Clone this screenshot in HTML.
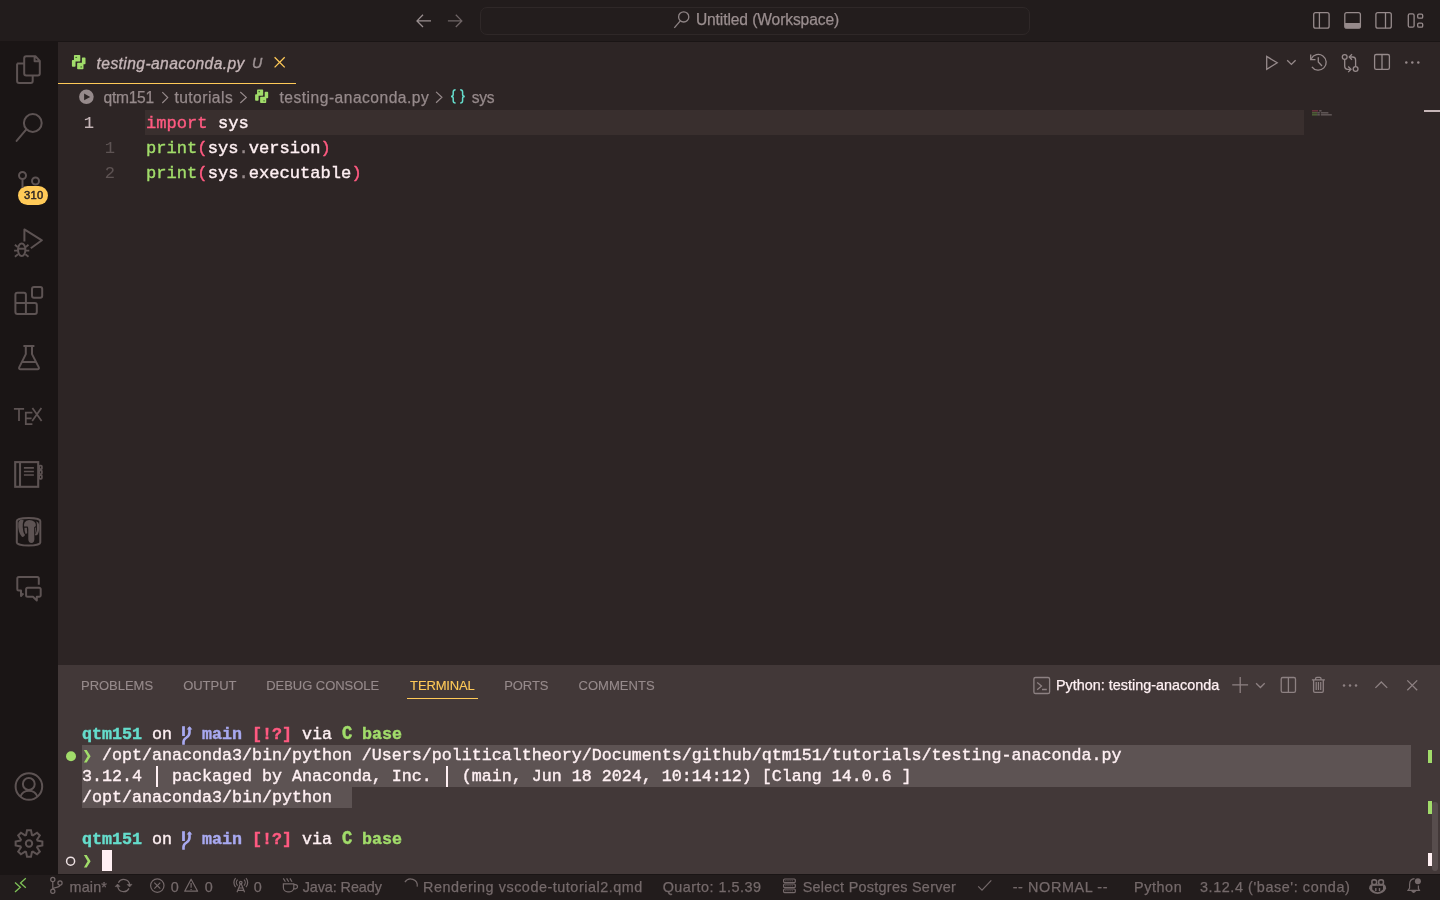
<!DOCTYPE html><html><head><meta charset="utf-8"><title>testing-anaconda.py</title><style>
html,body{margin:0;padding:0;background:#2d2525;font-family:"Liberation Sans", sans-serif}
#r{position:relative;width:1440px;height:900px;overflow:hidden;background:#2d2525;font-family:"Liberation Sans", sans-serif}
#r div,#r span,#r svg{position:absolute}
.t{white-space:pre;line-height:1;-webkit-text-stroke:0.25px currentColor}
.m{font-family:"Liberation Mono", monospace;white-space:pre;line-height:1;-webkit-text-stroke:0.4px currentColor}
</style></head><body><div id="r">
<div style="left:0;top:0;width:1440px;height:41px;background:#221c1c"></div>
<div style="left:0;top:41px;width:1440px;height:1px;background:#1a1515"></div>
<div style="left:0;top:42px;width:58px;height:833px;background:#1a1515"></div>
<div style="left:480px;top:6.5px;width:547.5px;height:26.5px;border:1px solid #2f2828;border-radius:7px;background:#231d1d"></div>
<div style="left:58px;top:82.8px;width:238.2px;height:1.4px;background:#ffca58"></div>
<div style="left:145px;top:110px;width:1159px;height:25px;background:#392f2e"></div>
<div style="left:1424px;top:110px;width:16px;height:2px;background:#c6b6b8"></div>
<div style="left:58px;top:664.5px;width:1382px;height:210px;background:#423838"></div>
<div style="left:406.6px;top:697.6px;width:71px;height:1.3px;background:#ffca58"></div>
<div style="left:82px;top:745px;width:1329px;height:42px;background:#5d5353"></div>
<div style="left:82px;top:787px;width:270px;height:21px;background:#5d5353"></div>
<div style="left:102.2px;top:850px;width:9.6px;height:21px;background:#fff0f3"></div>
<div style="left:1428px;top:750px;width:4.4px;height:13px;background:#a1dc6a"></div>
<div style="left:1428px;top:801px;width:4.4px;height:13px;background:#a1dc6a"></div>
<div style="left:1428px;top:853px;width:4.4px;height:13px;background:#fff0f3"></div>
<div style="left:1432.4px;top:802px;width:5.5px;height:69px;border-radius:3px;background:#574d4d"></div>
<div style="left:0;top:874.3px;width:1440px;height:26px;background:#221c1c"></div>
<div style="left:0;top:874px;width:1440px;height:1px;background:#1a1515"></div>
<div style="left:17.8px;top:185.5px;width:30.3px;height:19.6px;border-radius:10px;background:#ffca58"></div>
<div id="tx" style="left:0;top:0;width:1440px;height:900px;will-change:transform">
<span class="t" style="left:695.90px;top:12.29px;font-size:15.6px;color:#9a8e8f;letter-spacing:-0.106px">Untitled (Workspace)</span>
<span class="t" style="left:96.60px;top:55.69px;font-size:15.6px;color:#c6b6b8;letter-spacing:0.409px;font-style:italic;-webkit-text-stroke-width:0.35px">testing-anaconda.py</span>
<span class="t" style="left:251.90px;top:56.18px;font-size:14.2px;color:#9d9293;letter-spacing:0.000px;font-style:italic;-webkit-text-stroke-width:0.45px">U</span>
<span class="t" style="left:103.60px;top:89.69px;font-size:15.6px;color:#968a8b;letter-spacing:-0.288px">qtm151</span>
<span class="t" style="left:174.40px;top:89.69px;font-size:15.6px;color:#968a8b;letter-spacing:0.462px">tutorials</span>
<span class="t" style="left:279.50px;top:89.69px;font-size:15.6px;color:#968a8b;letter-spacing:0.492px">testing-anaconda.py</span>
<span class="t" style="left:471.80px;top:89.69px;font-size:15.6px;color:#968a8b;letter-spacing:-0.297px">sys</span>
<span class="t" style="left:81.00px;top:679.30px;font-size:13.0px;color:#968a8b;letter-spacing:-0.025px;-webkit-text-stroke-width:0.12px">PROBLEMS</span>
<span class="t" style="left:183.20px;top:679.30px;font-size:13.0px;color:#968a8b;letter-spacing:-0.040px;-webkit-text-stroke-width:0.12px">OUTPUT</span>
<span class="t" style="left:266.20px;top:679.30px;font-size:13.0px;color:#968a8b;letter-spacing:-0.037px;-webkit-text-stroke-width:0.12px">DEBUG CONSOLE</span>
<span class="t" style="left:410.10px;top:679.30px;font-size:13.0px;color:#ffca58;letter-spacing:-0.143px;-webkit-text-stroke-width:0.12px">TERMINAL</span>
<span class="t" style="left:504.30px;top:679.30px;font-size:13.0px;color:#968a8b;letter-spacing:-0.119px;-webkit-text-stroke-width:0.12px">PORTS</span>
<span class="t" style="left:578.50px;top:679.30px;font-size:13.0px;color:#968a8b;letter-spacing:0.049px;-webkit-text-stroke-width:0.12px">COMMENTS</span>
<span class="t" style="left:1056.00px;top:678.01px;font-size:14.4px;color:#fff0f3;letter-spacing:-0.000px">Python: testing-anaconda</span>
<span class="t" style="left:69.50px;top:879.81px;font-size:14.4px;color:#74696a;letter-spacing:0.152px">main*</span>
<span class="t" style="left:170.80px;top:879.81px;font-size:14.4px;color:#74696a;letter-spacing:0.000px">0</span>
<span class="t" style="left:204.70px;top:879.81px;font-size:14.4px;color:#74696a;letter-spacing:0.000px">0</span>
<span class="t" style="left:253.80px;top:879.81px;font-size:14.4px;color:#74696a;letter-spacing:0.000px">0</span>
<span class="t" style="left:302.70px;top:879.81px;font-size:14.4px;color:#74696a;letter-spacing:-0.080px">Java: Ready</span>
<span class="t" style="left:423.00px;top:879.81px;font-size:14.4px;color:#74696a;letter-spacing:0.528px">Rendering vscode-tutorial2.qmd</span>
<span class="t" style="left:662.70px;top:879.81px;font-size:14.4px;color:#74696a;letter-spacing:0.485px">Quarto: 1.5.39</span>
<span class="t" style="left:802.70px;top:879.81px;font-size:14.4px;color:#74696a;letter-spacing:0.282px">Select Postgres Server</span>
<span class="t" style="left:1012.70px;top:879.81px;font-size:14.4px;color:#74696a;letter-spacing:0.605px">-- NORMAL --</span>
<span class="t" style="left:1134.00px;top:879.81px;font-size:14.4px;color:#74696a;letter-spacing:0.580px">Python</span>
<span class="t" style="left:1200.00px;top:879.81px;font-size:14.4px;color:#74696a;letter-spacing:0.585px">3.12.4 ('base': conda)</span>
<span class="t" style="left:23.90px;top:189.52px;font-size:11.2px;color:#2d2525;letter-spacing:0.328px;-webkit-text-stroke-width:0.45px">310</span>
<span class="m" style="left:146px;top:114.89px;font-size:17.1px;letter-spacing:0.008px"><span style="position:static;color:#ff5a81">import</span><span style="position:static;color:#fff0f3"> sys</span></span>
<span class="m" style="left:146px;top:139.89px;font-size:17.1px;letter-spacing:0.008px"><span style="position:static;color:#a1dc6a">print</span><span style="position:static;color:#ff5a81">(</span><span style="position:static;color:#fff0f3">sys</span><span style="position:static;color:#968a8b">.</span><span style="position:static;color:#fff0f3">version</span><span style="position:static;color:#ff5a81">)</span></span>
<span class="m" style="left:146px;top:164.89px;font-size:17.1px;letter-spacing:0.008px"><span style="position:static;color:#a1dc6a">print</span><span style="position:static;color:#ff5a81">(</span><span style="position:static;color:#fff0f3">sys</span><span style="position:static;color:#968a8b">.</span><span style="position:static;color:#fff0f3">executable</span><span style="position:static;color:#ff5a81">)</span></span>
<span class="m" style="left:83.8px;top:114.89px;font-size:17.1px;color:#c6b6b8;-webkit-text-stroke-width:0.15px">1</span>
<span class="m" style="left:104.8px;top:139.89px;font-size:17.1px;color:#5d5353;-webkit-text-stroke-width:0.1px">1</span>
<span class="m" style="left:104.8px;top:164.89px;font-size:17.1px;color:#5d5353;-webkit-text-stroke-width:0.1px">2</span>
<span class="m" style="left:82px;top:727.32px;font-size:16.664px"><span style="position:static;color:#65ddcc;font-weight:bold">qtm151</span><span style="position:static;color:#fff0f3"> on   </span><span style="position:static;color:#a8a9f0;font-weight:bold">main</span><span style="position:static;color:#fff0f3"> </span><span style="position:static;color:#ff5a81;font-weight:bold">[!?]</span><span style="position:static;color:#fff0f3"> via </span><span style="position:static;color:#a1dc6a;font-weight:bold"> </span><span style="position:static;color:#fff0f3"> </span><span style="position:static;color:#a1dc6a;font-weight:bold">base</span></span>
<span class="m" style="left:341.8px;top:727.32px;font-size:16.664px;font-weight:bold;color:#a1dc6a;transform-origin:0 12.78px;transform:scale(1.03,1.2)">C</span>
<span class="m" style="left:341.8px;top:832.32px;font-size:16.664px;font-weight:bold;color:#a1dc6a;transform-origin:0 12.78px;transform:scale(1.03,1.2)">C</span>
<span class="m" style="left:82px;top:748.32px;font-size:16.664px"><span style="position:static;color:#fff0f3">  /opt/anaconda3/bin/python /Users/politicaltheory/Documents/github/qtm151/tutorials/testing-anaconda.py</span></span>
<span class="m" style="left:82px;top:769.32px;font-size:16.664px"><span style="position:static;color:#fff0f3">3.12.4   packaged by Anaconda, Inc.   (main, Jun 18 2024, 10:14:12) [Clang 14.0.6 ]</span></span>
<div style="left:155.9px;top:766px;width:2.1px;height:21px;background:#fff0f3"></div><div style="left:445.9px;top:766px;width:2.1px;height:21px;background:#fff0f3"></div>
<span class="m" style="left:82px;top:790.32px;font-size:16.664px"><span style="position:static;color:#fff0f3">/opt/anaconda3/bin/python</span></span>
<span class="m" style="left:82px;top:832.32px;font-size:16.664px"><span style="position:static;color:#65ddcc;font-weight:bold">qtm151</span><span style="position:static;color:#fff0f3"> on   </span><span style="position:static;color:#a8a9f0;font-weight:bold">main</span><span style="position:static;color:#fff0f3"> </span><span style="position:static;color:#ff5a81;font-weight:bold">[!?]</span><span style="position:static;color:#fff0f3"> via </span><span style="position:static;color:#a1dc6a;font-weight:bold"> </span><span style="position:static;color:#fff0f3"> </span><span style="position:static;color:#a1dc6a;font-weight:bold">base</span></span>
</div>
<svg width="1440" height="900" viewBox="0 0 1440 900" style="left:0;top:0" fill="none" stroke-linecap="butt" stroke-linejoin="miter">
<g stroke="#5d5353" stroke-width="2" stroke-linejoin="round">
<path d="M17.1 63.4 H24 M17.1 63.4 V80.9 a2 2 0 0 0 2 2 H30.7 a2 2 0 0 0 2 -2 V76"/>
<path d="M26.2 56.3 H35.4 L39.8 60.9 V73.6 a2 2 0 0 1 -2 2 H26.2 a2 2 0 0 1 -2 -2 V58.3 a2 2 0 0 1 2 -2 Z M34.6 56.6 V61.2 H39.6"/>
<circle cx="32.8" cy="123" r="8.9"/><path d="M26.3 129.3 L16.6 140.9" stroke-linecap="round"/>
<circle cx="22.5" cy="175.5" r="3.5"/><circle cx="35.5" cy="181" r="3.5"/><path d="M22.5 179 V188"/>
<path d="M24.4 241.4 V229.4 L41.9 240.3 L30.8 248.2" stroke-linejoin="round"/>
</g>
<g stroke="#5d5353" stroke-width="2">
<ellipse cx="21.7" cy="249.7" rx="3.7" ry="6.3"/><path d="M18 248.7 H25.4"/>
<path d="M14.9 244.8 L17.6 247 M14.1 250.7 H17.8 M14.9 256.8 L18 254.2 M28.5 244.8 L25.8 247 M29.3 250.7 H25.6 M28.5 256.8 L25.4 254.2" stroke-width="1.8"/>
</g>
<g stroke="#5d5353" stroke-width="2" stroke-linejoin="round">
<path d="M15.4 303 V294.7 a2 2 0 0 1 2 -2 H23.9 a2 2 0 0 1 2 2 V303 H34.8 a2 2 0 0 1 2 2 V312 a2 2 0 0 1 -2 2 H17.4 a2 2 0 0 1 -2 -2 Z M15.4 303 H25.9 V314"/>
<rect x="32" y="287.1" width="10.2" height="10.7" rx="2"/>
<path d="M23.4 346 H34.4 M25.8 346 V354.1 L19.2 367.4 a1.3 1.3 0 0 0 1.2 1.9 H37.6 a1.3 1.3 0 0 0 1.2 -1.9 L32 354.1 V346 M22.2 361.9 H35.6"/>
</g>
<g stroke="#5d5353" stroke-width="1.75">
<path d="M13.9 408.8 H24.1 M19 408.8 V420.9"/>
<path d="M32.4 412.7 H25.8 V424.2 H32.4 M25.8 418.3 H31.6"/>
<path d="M32.4 407.9 L41.6 420.9 M41.4 407.9 L32.2 420.9"/>
</g>
<g stroke="#5d5353" stroke-width="2.1">
<rect x="15.2" y="462.1" width="23" height="24.7"/><path d="M20 462 V487"/>
</g>
<g stroke="#5d5353" stroke-width="1.7">
<path d="M23.9 467.9 H33.9 M23.9 471.5 H33.9 M23.9 475 H33.9"/>
<rect x="39.3" y="465.6" width="2.6" height="3.6" rx="0.8"/><rect x="39.3" y="470.4" width="2.6" height="3.6" rx="0.8"/><rect x="39.3" y="475.2" width="2.6" height="3.6" rx="0.8"/>
</g>
<g stroke="#5d5353" stroke-width="2">
<path d="M16.8 521 A11.75 3 0 0 1 40.3 521 V542.5 A11.75 3 0 0 1 16.8 542.5 Z"/>
</g>
<g fill="#5d5353" stroke="none">
<path d="M20.2 520 Q18.5 521 18.3 522.7 Q17.8 527 19 531.5 Q19.8 534 21 535.4 Q22 537 22.7 537.1 Q23.8 536.6 25.1 534.9 Q23.6 533.4 23.3 531.5 Q22.4 527 22.8 523.7 Q23.1 521.5 23.8 520.5 Q22.2 519.4 20.2 520 Z"/>
<path d="M24.6 522.5 Q26 520 29 520 Q32.6 520 34.4 521.7 Q35.8 523 35.9 525.2 L35.4 526.6 L34.2 526.9 L34.2 532 L34.4 539.3 Q34.2 543 31.5 543 Q28.4 543 28.3 539.3 L28.3 529.6 Q28.3 527.4 27.6 526.6 L24.1 526.4 Q23.7 524.4 24.6 522.5 Z"/>
<path d="M24.4 527.7 H26.9 L27.2 533.2 L25.6 534 Q24.4 531.5 24.4 527.7 Z"/>
<path d="M36.1 521.2 Q38.6 522 39.3 524.7 Q39.6 527.4 39.3 529.6 Q38.8 532.4 37.8 534.4 L36 535.6 L34.8 535 Q36.9 532 36.9 529.6 V524.7 Q36.8 522.6 36.1 521.2 Z"/>
<path d="M35 527.8 L35.8 527.5 Q36 531 35.3 533.6 L35 533.6 Z"/>
</g>
<g stroke="#5d5353" stroke-width="2" stroke-linejoin="round">
<path d="M38.8 584.8 V578.5 a1.5 1.5 0 0 0 -1.5 -1.5 H18.8 a1.5 1.5 0 0 0 -1.5 1.5 V588.9 a1.5 1.5 0 0 0 1.5 1.5 H21 V596 L23.4 593.4"/>
<path d="M27.6 587.8 H39.2 a1.5 1.5 0 0 1 1.5 1.5 V595.3 a1.5 1.5 0 0 1 -1.5 1.5 H36.8 V600.4 L33 596.8 H27.6 a1.5 1.5 0 0 1 -1.5 -1.5 V589.3 a1.5 1.5 0 0 1 1.5 -1.5 Z"/>
<circle cx="28.9" cy="786.5" r="13.3"/><circle cx="28.8" cy="784" r="5.9"/><path d="M20.3 796.6 A9.2 9.2 0 0 1 37.5 796.6"/>
</g>
<g stroke="#5d5353" stroke-width="2" stroke-linejoin="miter">
<path d="M26.05 835.00 L27.05 830.14 L30.95 830.14 L31.95 835.00 L32.93 835.40 L37.07 832.68 L39.82 835.43 L37.10 839.57 L37.50 840.55 L42.36 841.55 L42.36 845.45 L37.50 846.45 L37.10 847.43 L39.82 851.57 L37.07 854.32 L32.93 851.60 L31.95 852.00 L30.95 856.86 L27.05 856.86 L26.05 852.00 L25.07 851.60 L20.93 854.32 L18.18 851.57 L20.90 847.43 L20.50 846.45 L15.64 845.45 L15.64 841.55 L20.50 840.55 L20.90 839.57 L18.18 835.43 L20.93 832.68 L25.07 835.40 Z"/><circle cx="29" cy="843.5" r="3.2"/>
</g>
<g stroke="#9a8f90" stroke-width="1.3"><path d="M423 14.8 L417 20.9 L423 27 M417.2 20.9 H431"/></g>
<g stroke="#6f6566" stroke-width="1.3"><path d="M455.8 14.8 L461.8 20.9 L455.8 27 M461.6 20.9 H447.9"/></g>
<g stroke="#8e8485" stroke-width="1.3"><circle cx="683.7" cy="16.9" r="5.1"/><path d="M680.3 20.8 L674.3 27.8"/></g>
<g stroke="#968a8b" stroke-width="1.3">
<rect x="1313.7" y="12.6" width="15.4" height="15.6" rx="2"/><path d="M1319.4 12.6 V28.2"/>
<rect x="1344.8" y="12.6" width="15.6" height="15.6" rx="2"/>
<rect x="1375.9" y="12.6" width="15.4" height="15.6" rx="2"/><path d="M1385.5 12.6 V28.2"/>
<rect x="1408.3" y="13.9" width="5.8" height="13.3" rx="1.5"/><rect x="1417.7" y="14.2" width="5" height="4" rx="1.2"/><rect x="1417.7" y="23.1" width="5" height="4.1" rx="1.2"/>
</g>
<path d="M1344.8 23 H1360.4 V26.2 a2 2 0 0 1 -2 2 H1346.8 a2 2 0 0 1 -2 -2 Z" fill="#968a8b"/>
<g transform="translate(78.72 62.14) scale(1.0)" fill="#a1dc6a" stroke="#a1dc6a" stroke-width="1.6" stroke-linejoin="round"><path d="M-3.97 -6.28 L0.78 -6.28 L0.78 -1.38 L-3.98 -1.38 L-3.98 3.82 L-6.00 3.82 L-6.00 -1.37 L-3.97 -1.37 Z"/><path d="M-3.97 -6.28 L0.78 -6.28 L0.78 -1.38 L-3.98 -1.38 L-3.98 3.82 L-6.00 3.82 L-6.00 -1.37 L-3.97 -1.37 Z" transform="rotate(180)"/><ellipse cx="-2.5" cy="-4.75" rx="0.95" ry="0.6" fill="#3f6a2c" stroke="none"/><ellipse cx="2.5" cy="4.75" rx="0.95" ry="0.6" fill="#3f6a2c" stroke="none"/></g>
<g transform="translate(261.65 96.25) scale(0.96)" fill="#a1dc6a" stroke="#a1dc6a" stroke-width="1.6" stroke-linejoin="round"><path d="M-3.97 -6.28 L0.78 -6.28 L0.78 -1.38 L-3.98 -1.38 L-3.98 3.82 L-6.00 3.82 L-6.00 -1.37 L-3.97 -1.37 Z"/><path d="M-3.97 -6.28 L0.78 -6.28 L0.78 -1.38 L-3.98 -1.38 L-3.98 3.82 L-6.00 3.82 L-6.00 -1.37 L-3.97 -1.37 Z" transform="rotate(180)"/><ellipse cx="-2.5" cy="-4.75" rx="0.95" ry="0.6" fill="#3f6a2c" stroke="none"/><ellipse cx="2.5" cy="4.75" rx="0.95" ry="0.6" fill="#3f6a2c" stroke="none"/></g>
<g stroke="#ffca58" stroke-width="1.3"><path d="M274.6 57.3 L284.7 67.4 M284.7 57.3 L274.6 67.4"/></g>
<circle cx="86.4" cy="96.8" r="7.3" fill="#968a8b"/><path d="M84.1 93.4 V100.3 L90.2 96.9 Z" fill="#2d2525"/>
<g stroke="#968a8b" stroke-width="1.2"><path d="M162.3 92.2 L167.7 97.6 L162.3 103 M240.3 92 L246.3 97.4 L240.3 103 M436.1 91.9 L441.9 97.3 L436.1 102.7"/></g>
<g stroke="#65ddcc" stroke-width="1.5"><path d="M455.6 89.7 Q453.2 89.7 453.2 92 V94.6 Q453.2 96.4 451 96.4 Q453.2 96.4 453.2 98.2 V100.8 Q453.2 103.1 455.6 103.1"/><path d="M460.2 89.7 Q462.6 89.7 462.6 92 V94.6 Q462.6 96.4 464.8 96.4 Q462.6 96.4 462.6 98.2 V100.8 Q462.6 103.1 460.2 103.1"/></g>
<g stroke="#968a8b" stroke-width="1.3">
<path d="M1266.7 56.4 V69.3 L1277.2 62.8 Z"/>
<path d="M1287.2 60.2 L1291.4 64.4 L1295.6 60.2"/>
<path d="M1311.3 58.8 A7.85 7.85 0 1 1 1311.9 66.8"/><path d="M1310.7 54.6 V59.6 H1315.5" /><path d="M1318.3 57.3 V62 L1322 66"/>
<circle cx="1344.7" cy="57" r="2.4"/><circle cx="1355.6" cy="69" r="2.4"/>
<path d="M1344.7 59.4 V66.3 Q1344.7 69.3 1347.7 69.3 H1350"/><path d="M1355.6 66.6 V60 Q1355.6 57 1352.6 57 H1350.2"/>
<path d="M1348.2 66.5 L1351 69.3 L1348.2 72.1 M1352 54.2 L1349.2 57 L1352 59.8"/>
<rect x="1374.6" y="54.5" width="14.8" height="14.8" rx="1.6"/><path d="M1382 54.5 V69.3"/>
</g>
<g fill="#968a8b"><circle cx="1406.3" cy="62.4" r="1.25"/><circle cx="1412.3" cy="62.4" r="1.25"/><circle cx="1418.3" cy="62.4" r="1.25"/></g>
<g opacity="0.5"><rect x="1312" y="110" width="6" height="1.6" fill="#a23d57"/><rect x="1319.2" y="110" width="2.4" height="1.6" fill="#8d8384"/><rect x="1312" y="112" width="5" height="1.6" fill="#6d9449"/><rect x="1317.2" y="112" width="2.6" height="1.6" fill="#8d8384"/><rect x="1320.8" y="112" width="7.6" height="1.6" fill="#8d8384"/><rect x="1312" y="114" width="5" height="1.6" fill="#6d9449"/><rect x="1317.2" y="114" width="2.6" height="1.6" fill="#8d8384"/><rect x="1320.8" y="114" width="11" height="1.6" fill="#8d8384"/></g>
<g stroke="#8d8182" stroke-width="1.3">
<rect x="1033.9" y="677.5" width="15.7" height="16" rx="1.6"/><path d="M1037.2 682.4 L1041.5 686 L1037.2 689.7 M1042 689.5 H1046.8"/>
<path d="M1232.2 684.9 H1248.1 M1240.2 677.1 V692.9"/>
<path d="M1256.1 683.2 L1260.4 687.5 L1264.7 683.2"/>
<rect x="1281.2" y="677.5" width="14.3" height="14.8" rx="1.6"/><path d="M1288.4 677.5 V692.3"/>
<path d="M1311.9 679.8 H1324.9 M1315.6 679.6 V678.6 a1.2 1.2 0 0 1 1.2 -1.2 H1319.8 a1.2 1.2 0 0 1 1.2 1.2 V679.6"/>
<path d="M1313.6 680 V691 a1.3 1.3 0 0 0 1.3 1.3 H1322 a1.3 1.3 0 0 0 1.3 -1.3 V680"/>
<path d="M1316.2 682 V690 M1318.45 682 V690 M1320.7 682 V690" stroke-width="1.2"/>
<path d="M1375.4 687.9 L1381.3 682 L1387.2 687.9"/>
<path d="M1407.3 680.4 L1417.2 690.3 M1417.2 680.4 L1407.3 690.3"/>
</g>
<g fill="#8d8182"><circle cx="1344" cy="685.5" r="1.25"/><circle cx="1350" cy="685.5" r="1.25"/><circle cx="1356" cy="685.5" r="1.25"/></g>
<g stroke="#a8a9f0" fill="none"><path d="M183.5 726.2 V736" stroke-width="2.8"/><path d="M189.5 727.4 V732.5 Q189.5 735.5 186.5 737.5 Q183.5 739.3 183.5 742 V744.8" stroke-width="2.6"/></g><path d="M186.6 729.6 L189.5 726.2 L192.4 729.6 Z" fill="#a8a9f0"/>
<g stroke="#a8a9f0" fill="none"><path d="M183.5 831.2 V841" stroke-width="2.8"/><path d="M189.5 832.4 V837.5 Q189.5 840.5 186.5 842.5 Q183.5 844.3 183.5 847 V849.8" stroke-width="2.6"/></g><path d="M186.6 834.6 L189.5 831.2 L192.4 834.6 Z" fill="#a8a9f0"/>
<path d="M83.9 750.1 H86.7 L90.6 756.3 L86.7 762.6 H83.9 L87.6 756.3 Z" fill="#a1dc6a"/>
<path d="M83.9 855.1 H86.7 L90.6 861.3 L86.7 867.6 H83.9 L87.6 861.3 Z" fill="#a1dc6a"/>
<circle cx="71" cy="756.2" r="5" fill="#a1dc6a"/>
<circle cx="70.6" cy="861.2" r="4" stroke="#ece0e2" stroke-width="1.5"/>
<g stroke="#7fc257" stroke-width="1.3"><path d="M15 882.5 L20.3 887.3 L15 892 M25.8 878.3 L20.5 883 L25.8 887.8"/></g>
<g stroke="#74696a" stroke-width="1.2">
<circle cx="52.8" cy="879.5" r="2.1"/><circle cx="52.8" cy="891.3" r="2.1"/><circle cx="60" cy="883" r="2.1"/><path d="M52.8 881.6 V889.2 M60 885.1 C60 888.3 54.2 886.4 52.9 889"/>
<path d="M118.4 882.7 A6 6 0 0 1 129.7 885 M129 888.4 A6 6 0 0 1 117.7 886.2"/><path d="M127.2 884.5 L132 884.3 L129.6 887 Z M115.2 886.6 L117.6 884 L120 886.6 Z" fill="#74696a" stroke-width="0.6"/>
<circle cx="157.3" cy="885.6" r="6.7"/><path d="M154.3 882.6 L160.3 888.6 M160.3 882.6 L154.3 888.6"/>
<path d="M191.1 879.2 L197.6 891.2 H184.7 Z" stroke-linejoin="round"/><path d="M191.1 883 V887.7 M191.1 888.9 V890.1"/>
<circle cx="240.8" cy="882.6" r="1.3"/><path d="M240.3 884 L237 892.2 M241.3 884 L244.6 892.2 M238.7 888 H242.9 M237.9 890.4 H243.7"/>
<path d="M237.6 879.6 A4.3 4.3 0 0 0 237.6 885.6 M244 879.6 A4.3 4.3 0 0 1 244 885.6 M235.6 878.2 A6.6 6.6 0 0 0 235.6 887 M246 878.2 A6.6 6.6 0 0 1 246 887"/>
<path d="M283.4 883.9 H293.8 V887.5 a4.4 4.4 0 0 1 -4.4 4.4 H287.8 a4.4 4.4 0 0 1 -4.4 -4.4 Z M293.8 884.6 H295.4 a2.1 2.1 0 0 1 0 4.2 H293.6"/><path d="M283.3 878.4 L285.4 881.8 M286.6 878.4 L288.7 881.8 M289.9 878.4 L292 881.8"/>
<path d="M404.9 882.1 A6.7 6.7 0 0 1 417.2 886.7"/>
<rect x="783.6" y="879" width="11.7" height="3.6" rx="1"/><rect x="783.6" y="884" width="11.7" height="3.6" rx="1"/><rect x="783.6" y="889" width="11.7" height="3.6" rx="1"/><path d="M785.4 880.8 H793.6 M785.4 885.8 H793.6 M785.4 890.8 H793.6" stroke-dasharray="1 1.1" stroke-width="1"/>
<path d="M978.2 886.4 L982 890.2 L991.3 880.3"/>
<rect x="1371.9" y="879.9" width="4.7" height="4.7" rx="1.8" stroke-width="1.6"/><rect x="1378.7" y="879.9" width="4.7" height="4.7" rx="1.8" stroke-width="1.6"/>
<path d="M1371 884.2 Q1369 885.6 1369 888.6 Q1371.6 894 1377.6 894 Q1383.7 894 1386.2 888.6 Q1386.2 885.6 1384.2 884.2 Z M1372.3 885.8 H1383 V889.6 Q1380.4 892.2 1377.6 892.2 Q1374.8 892.2 1372.3 889.6 Z" fill="#74696a" fill-rule="evenodd" stroke="none"/><path d="M1375.8 888 V891 M1379.5 888 V891" stroke-width="1.4"/>
<path d="M1414.5 878.6 Q1409.6 878.8 1409.6 884.4 V888 L1408 890.4 H1419.4 L1418.4 888.6 V885.4"/><path d="M1412 891.2 Q1413.6 893.4 1415.4 891.2 Z" fill="#74696a"/>
</g>
<circle cx="1417.9" cy="881.3" r="3" fill="#74696a"/>
</svg>
</div></body></html>
